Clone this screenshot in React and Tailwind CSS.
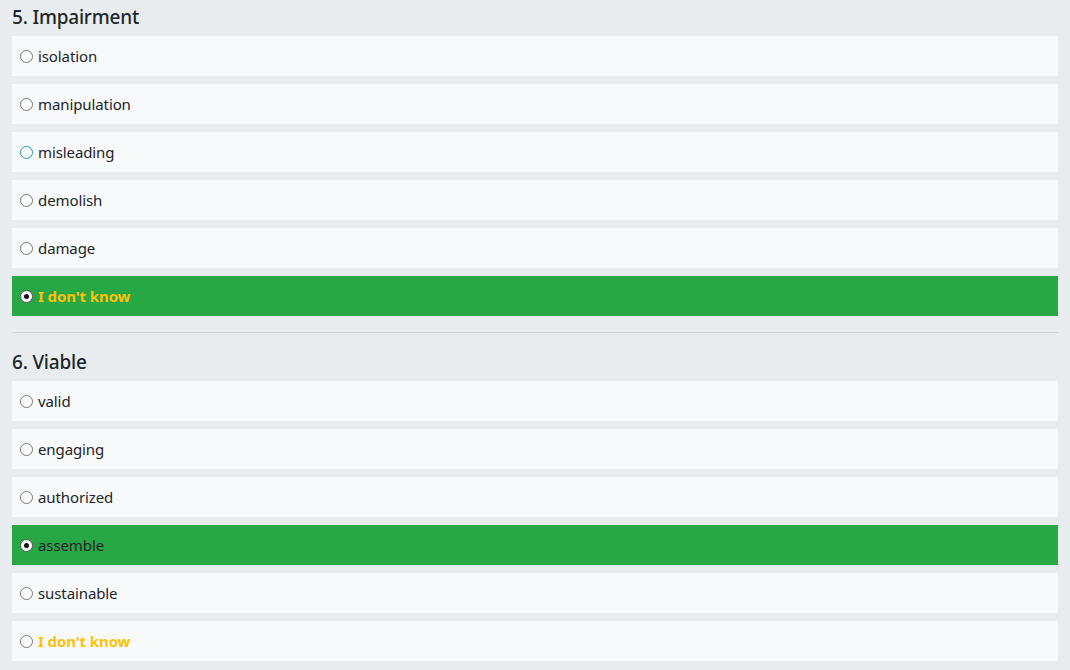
import { useState } from 'react';

const questions = [
  {
    title: '5. Impairment',
    options: ['isolation', 'manipulation', 'misleading', 'demolish', 'damage', "I don't know"],
    selected: 5,
    focus: 2,
  },
  {
    title: '6. Viable',
    options: ['valid', 'engaging', 'authorized', 'assemble', 'sustainable', "I don't know"],
    selected: 3,
    focus: -1,
  },
];

function Radio({ checked, focus }) {
  return (
    <span
      className={`flex h-[13px] w-[13px] shrink-0 items-center justify-center rounded-full border-[1.5px] bg-white ${
        focus ? 'border-[#1a8fe0]' : checked ? 'border-[#555]' : 'border-[#767676]'
      }`}
    >
      {checked && <span className="h-[5px] w-[5px] rounded-full bg-[#111]" />}
    </span>
  );
}

function Question({ q }) {
  const [selected, setSelected] = useState(q.selected);
  return (
    <div>
      <div className="mb-[7px] h-6 text-[19px] font-medium leading-6 tracking-[-0.2px] text-[#212529]">{q.title}</div>
      <div className="flex flex-col gap-2">
        {q.options.map((opt, i) => {
          const isChecked = selected === i;
          const unknown = opt === "I don't know";
          return (
            <div
              key={opt}
              onClick={() => setSelected(i)}
              className={`flex h-10 items-center gap-[5px] pl-[8px] text-[15px] tracking-[-0.1px] ${isChecked ? 'bg-[#28a745]' : 'bg-[#f8f9fa]'}`}
            >
              <Radio checked={isChecked} focus={q.focus === i} />
              <span className={unknown ? 'font-bold text-[#ffc107]' : 'text-[#212529]'}>{opt}</span>
            </div>
          );
        })}
      </div>
    </div>
  );
}

export default function App() {
  return (
    <div className="min-h-[670px] bg-[#e9ecef] px-3 pt-[5px] font-['Noto_Sans',sans-serif]">
      <Question q={questions[0]} />
      <div className="mt-4 mb-[17px] h-px bg-[#ced4da]" />
      <Question q={questions[1]} />
    </div>
  );
}
